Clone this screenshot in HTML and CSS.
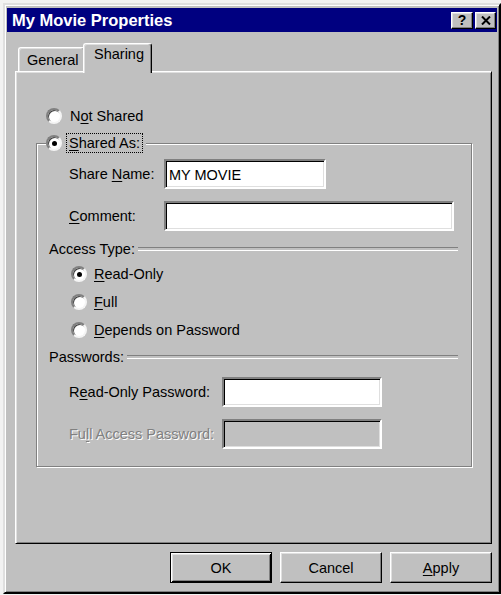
FILE: index.html
```html
<!DOCTYPE html>
<html>
<head>
<meta charset="utf-8">
<title>My Movie Properties</title>
<link rel="stylesheet" href="styles.css">
</head>
<body>
<div class="window">
  <div class="titlebar">
    <span class="title">My Movie Properties</span>
    <div class="tbtns">
      <span class="tbtn help">?</span>
      <span class="tbtn close"><svg width="10" height="9" viewBox="0 0 10 9"><path d="M1 0.5 L9 8.5 M9 0.5 L1 8.5" stroke="#000" stroke-width="2" fill="none"/></svg></span>
    </div>
  </div>
  <div class="tabs">
    <div class="tab">General</div>
    <div class="tab active">Sharing</div>
  </div>
  <div class="panel">
    <div class="opt top-opt"><span class="radio"></span><span class="lbl">N<u>o</u>t Shared</span></div>
    <fieldset class="group">
      <legend class="legend"><span class="radio checked"></span><span class="focus"><u>S</u>hared As:</span></legend>
      <div class="field first"><span class="flabel">Share <u>N</u>ame:</span><input class="edit name" type="text" value="MY MOVIE"></div>
      <div class="field comment"><span class="flabel"><u>C</u>omment:</span><input class="edit wide" type="text" value=""></div>
      <div class="sep access">Access Type:</div>
      <div class="radios">
        <div class="opt sub"><span class="radio checked"></span><span class="lbl"><u>R</u>ead-Only</span></div>
        <div class="opt sub"><span class="radio"></span><span class="lbl"><u>F</u>ull</span></div>
        <div class="opt sub"><span class="radio"></span><span class="lbl"><u>D</u>epends on Password</span></div>
      </div>
      <div class="sep pw">Passwords:</div>
      <div class="field pwrow"><span class="flabel plabel">R<u>e</u>ad-Only Password:</span><input class="edit pass" type="text" value=""></div>
      <div class="field pwrow2"><span class="flabel plabel disabled">Fu<u>l</u>l Access Password:</span><input class="edit pass off" type="text" value="" disabled></div>
    </fieldset>
  </div>
  <div class="buttons">
    <button class="btn default">OK</button>
    <button class="btn">Cancel</button>
    <button class="btn"><u>A</u>pply</button>
  </div>
</div>
</body>
</html>
```
FILE: styles.css
```css
* { box-sizing: border-box; }
html, body { margin: 0; padding: 0; }
body {
  background: #f2f2f2;
  font-family: "Liberation Sans", Arial, sans-serif;
  font-size: 14.5px;
  color: #000;
  width: 501px;
  height: 595px;
  overflow: hidden;
}
u { text-decoration: underline; text-underline-offset: 2px; text-decoration-thickness: 1px; }

.window {
  margin: 3px 0 0 3px;
  width: 498px;
  height: 591px;
  background: #c0c0c0;
  border: 2px solid;
  border-color: #dfdfdf #000 #000 #dfdfdf;
  box-shadow: inset 1px 1px 0 #fff, inset -1px -1px 0 #808080;
  padding: 3px 2px 0 2px;
  display: flex;
  flex-direction: column;
}

.titlebar {
  height: 24px;
  background: #000080;
  display: flex;
  align-items: center;
  justify-content: space-between;
  padding: 0 1px 0 5px;
}
.title {
  color: #fff;
  font-weight: bold;
  font-size: 16.5px;
  line-height: 18px;
}
.tbtns { display: flex; gap: 2px; }
.tbtn {
  width: 22px;
  height: 17px;
  background: #c0c0c0;
  border: 1px solid;
  border-color: #fff #000 #000 #fff;
  box-shadow: inset -1px -1px 0 #808080, inset 1px 1px 0 #dfdfdf;
  display: flex;
  align-items: center;
  justify-content: center;
  font-weight: bold;
  font-size: 14px;
  line-height: 14px;
}
.tbtn.close { width: 21px; }

.tabs {
  display: flex;
  align-items: flex-end;
  margin-top: 11px;
  padding-left: 11px;
  height: 28px;
}
.tab {
  height: 24px;
  width: 67px;
  background: #c0c0c0;
  border-top: 1px solid #fff;
  border-left: 1px solid #fff;
  border-right: 1px solid #000;
  border-radius: 3px 3px 0 0;
  box-shadow: inset -1px 0 0 #808080, inset 1px 1px 0 #dfdfdf;
  padding: 3px 0 0 8px;
  line-height: 18px;
}
.tab.active {
  position: relative;
  z-index: 1;
  height: 30px;
  width: 69px;
  margin-left: -2px;
  margin-bottom: -2px;
  padding: 1px 0 0 10px;
}

.panel {
  height: 473px;
  margin: 0 5px 0 8px;
  background: #c0c0c0;
  border: 1px solid;
  border-color: #fff #000 #000 #fff;
  box-shadow: inset 1px 1px 0 #dfdfdf, inset -1px -1px 0 #808080;
  padding: 34px 19px 0 20px;
}

.opt {
  display: flex;
  align-items: center;
  height: 20px;
  line-height: 18px;
}
.top-opt { margin-left: 10px; gap: 8px; }

.radio {
  flex: none;
  width: 16px;
  height: 16px;
  border-radius: 50%;
  background: #fff;
  border: 2px solid;
  border-color: #808080 #f4f4f4 #f4f4f4 #808080;
  box-shadow: inset 1px 1px 0 #404040;
  display: flex;
  align-items: center;
  justify-content: center;
}
.radio.checked::after {
  content: "";
  width: 5px;
  height: 5px;
  border-radius: 50%;
  background: #000;
}

.group {
  margin: 7px 0 0 0;
  padding: 6px 13px 17px 9px;
  border: 1px solid #808080;
  box-shadow: 1px 1px 0 #fff, inset 1px 1px 0 #fff;
  min-width: 0;
}
.legend {
  padding: 0 3px 0 0;
  background: #c0c0c0;
  display: flex;
  align-items: center;
  gap: 4px;
  height: 20px;
}
.focus {
  border: 1px dotted #000;
  padding: 0 2px;
  line-height: 18px;
}

.field {
  display: flex;
  align-items: center;
  height: 30px;
  margin-left: 23px;
  line-height: 18px;
}
.field.comment { margin-top: 12px; margin-right: 4px; }
.flabel { width: 95px; flex: none; }
.plabel { width: 153px; }
.disabled { color: #808080; text-shadow: 1px 1px 0 #fff; }

.edit {
  height: 30px;
  margin: 0;
  border: 2px solid;
  border-color: #808080 #fff #fff #808080;
  box-shadow: inset 1px 1px 0 #000, inset -1px -1px 0 #dfdfdf;
  background: #fff;
  font-family: "Liberation Sans", Arial, sans-serif;
  font-size: 14.5px;
  color: #000;
  padding: 2px 0 0 3px;
  outline: none;
}
.edit.name { width: 162px; }
.edit.wide { flex: 1; min-width: 0; }
.edit.pass { width: 160px; }
.edit.off { background: #c0c0c0; }

.sep {
  display: flex;
  align-items: center;
  gap: 3px;
  height: 18px;
  line-height: 18px;
  margin-left: 3px;
}
.sep::after {
  content: "";
  flex: 1;
  height: 2px;
  border-top: 1px solid #808080;
  border-bottom: 1px solid #fff;
}
.sep.access { margin-top: 9px; }
.sep.pw { margin-top: 4px; }

.radios { margin-top: 2px; }
.opt.sub {
  height: 28px;
  margin-left: 25px;
  gap: 7px;
}

.pwrow { margin-top: 11px; }
.pwrow2 { margin-top: 12px; }

.buttons {
  display: flex;
  justify-content: flex-end;
  gap: 8px;
  margin-top: 8px;
  padding-right: 5px;
}
.btn {
  width: 102px;
  height: 31px;
  margin: 0;
  padding: 0;
  background: #c0c0c0;
  border: 1px solid;
  border-color: #fff #000 #000 #fff;
  box-shadow: inset -1px -1px 0 #808080, inset 1px 1px 0 #dfdfdf;
  font-family: "Liberation Sans", Arial, sans-serif;
  font-size: 14.5px;
  color: #000;
}
.btn.default {
  border: 1px solid #000;
  box-shadow: inset 1px 1px 0 #fff, inset -1px -1px 0 #000, inset 2px 2px 0 #dfdfdf, inset -2px -2px 0 #808080;
}
```
